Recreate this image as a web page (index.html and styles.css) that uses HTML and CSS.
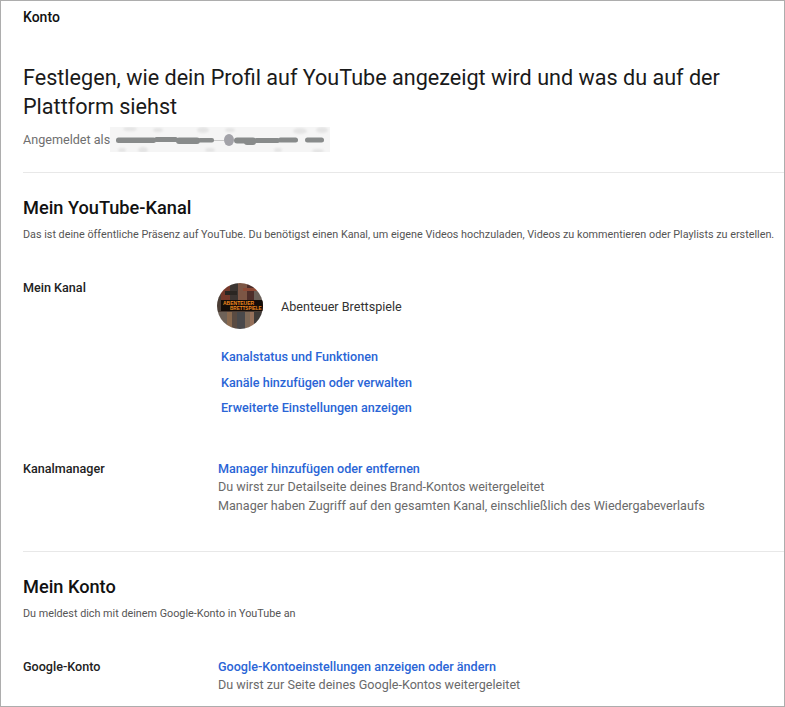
FILE: index.html
```html
<!DOCTYPE html>
<html>
<head>
    <title>Konto</title>
    <link rel="stylesheet" href="styles.css">
</head>
<body>
    <div class="page">
        <div class="crumb">Konto</div>
        <h1>Festlegen, wie dein Profil auf YouTube angezeigt wird und was du auf der Plattform siehst</h1>
        <div class="signed-in">
            <span>Angemeldet als</span>
            <svg class="redacted" width="220" height="25" viewBox="0 0 220 25">
                <defs>
                    <filter id="smear"><feGaussianBlur stdDeviation="0.7"/></filter>
                    <filter id="fade"><feGaussianBlur stdDeviation="1.2"/></filter>
                </defs>
                <rect width="220" height="25" fill="#f5f5f5"/>
                <g fill="#e4e4e4" filter="url(#fade)">
                    <ellipse cx="20" cy="2" rx="7" ry="2"/>
                    <ellipse cx="48" cy="3" rx="5" ry="2"/>
                    <ellipse cx="93" cy="3" rx="6" ry="3"/>
                    <ellipse cx="120" cy="3" rx="5" ry="2"/>
                    <ellipse cx="190" cy="4" rx="7" ry="3"/>
                    <ellipse cx="212" cy="3" rx="6" ry="3"/>
                    <ellipse cx="12" cy="23" rx="4" ry="2"/>
                    <ellipse cx="33" cy="23" rx="5" ry="3"/>
                    <ellipse cx="100" cy="23" rx="5" ry="2"/>
                    <ellipse cx="168" cy="23" rx="4" ry="2"/>
                    <ellipse cx="208" cy="24" rx="6" ry="2"/>
                </g>
                <g filter="url(#smear)" fill="#888b8b">
                    <rect x="6" y="10.5" width="40" height="5.5" rx="2.5"/>
                    <rect x="44" y="10" width="24" height="5" rx="2.5"/>
                    <rect x="66" y="10.5" width="24" height="6.5" rx="3"/>
                    <rect x="88" y="11" width="16" height="4.5" rx="2"/>
                    <path d="M104 13.5 H114" stroke="#c8c8c8" stroke-width="1" fill="none"/>
                    <ellipse cx="119" cy="13" rx="5" ry="6" fill="#a2a2a8"/>
                    <rect x="124" y="10.5" width="22" height="6" rx="3"/>
                    <rect x="134" y="12" width="12" height="6" rx="3"/>
                    <rect x="144" y="11" width="26" height="5" rx="2.5"/>
                    <rect x="168" y="10.5" width="20" height="5" rx="2.5"/>
                    <rect x="195" y="10.5" width="19" height="5" rx="2.5"/>
                </g>
            </svg>
        </div>

        <section class="section">
            <h2>Mein YouTube-Kanal</h2>
            <p class="intro">Das ist deine öffentliche Präsenz auf YouTube. Du benötigst einen Kanal, um eigene Videos hochzuladen, Videos zu kommentieren oder Playlists zu erstellen.</p>

            <div class="row row-channel">
                <div class="label">Mein Kanal</div>
                <div class="value">
                    <div class="channel">
                        <svg class="avatar" width="46" height="46" viewBox="0 0 46 46">
                            <defs>
                                <clipPath id="round"><circle cx="23" cy="23" r="23"/></clipPath>
                                <filter id="soft"><feGaussianBlur stdDeviation="0.6"/></filter>
                            </defs>
                            <g clip-path="url(#round)">
                                <g filter="url(#soft)">
                                    <rect width="46" height="46" fill="#4b3d36"/>
                                    <rect x="4" y="0" width="9" height="18" fill="#74392b"/>
                                    <rect x="13" y="0" width="8" height="18" fill="#3b3533"/>
                                    <rect x="21" y="0" width="9" height="18" fill="#7c5644"/>
                                    <rect x="30" y="0" width="7" height="18" fill="#4d2f2a"/>
                                    <rect x="37" y="0" width="9" height="18" fill="#6a6059"/>
                                    <rect x="8" y="8" width="12" height="4" fill="#2b2624"/>
                                    <rect x="26" y="5" width="14" height="3" fill="#8c4a34"/>
                                    <rect x="0" y="29" width="10" height="17" fill="#6e6258"/>
                                    <rect x="10" y="29" width="5" height="17" fill="#8a6a50"/>
                                    <rect x="15" y="29" width="5" height="17" fill="#5a4c42"/>
                                    <rect x="20" y="29" width="8" height="17" fill="#4a4a4c"/>
                                    <rect x="28" y="29" width="5" height="17" fill="#7f6a58"/>
                                    <rect x="33" y="29" width="4" height="17" fill="#95705a"/>
                                    <rect x="37" y="29" width="9" height="17" fill="#3f3a38"/>
                                </g>
                                <rect x="4" y="17" width="42" height="11" fill="#140d09"/>
                            </g>
                            <text class="avatar-text" x="6" y="22">ABENTEUER</text>
                            <text class="avatar-text avatar-text-small" x="13" y="27.2">BRETTSPIELE</text>
                        </svg>
                        <span>Abenteuer Brettspiele</span>
                    </div>
                    <div class="channel-links">
                        <a href="#">Kanalstatus und Funktionen</a>
                        <a href="#">Kanäle hinzufügen oder verwalten</a>
                        <a href="#">Erweiterte Einstellungen anzeigen</a>
                    </div>
                </div>
            </div>

            <div class="row row-manager">
                <div class="label">Kanalmanager</div>
                <div class="value">
                    <a href="#">Manager hinzufügen oder entfernen</a>
                    <div class="note">Du wirst zur Detailseite deines Brand-Kontos weitergeleitet</div>
                    <div class="note">Manager haben Zugriff auf den gesamten Kanal, einschließlich des Wiedergabeverlaufs</div>
                </div>
            </div>
        </section>

        <section class="section">
            <h2>Mein Konto</h2>
            <p class="intro">Du meldest dich mit deinem Google-Konto in YouTube an</p>

            <div class="row row-google">
                <div class="label">Google-Konto</div>
                <div class="value">
                    <a href="#">Google-Kontoeinstellungen anzeigen oder ändern</a>
                    <div class="note">Du wirst zur Seite deines Google-Kontos weitergeleitet</div>
                </div>
            </div>
        </section>
    </div>
</body>
</html>
```
FILE: styles.css
```css
html, body { margin: 0; padding: 0; height: 100%; background: #fff; }
body { font-family: Roboto, Arial, sans-serif; color: #111; overflow: hidden; }
a { color: #2a65d6; text-decoration: none; font-weight: 500; font-size: 12.6px; line-height: 18px; }
.page { box-sizing: border-box; height: 707px; padding: 9px 0 0 22px; border: 1px solid #adadad; overflow: hidden; }
.crumb { font-size: 14px; font-weight: 500; line-height: 15px; }
h1 { margin: 38px 40px 0 0; font-size: 21.6px; font-weight: 400; line-height: 29px; color: #1a1a1a; }
.signed-in { display: flex; align-items: center; height: 25px; margin-top: 6px; font-size: 12.6px; color: #6f6f6f; }
.section { margin-top: 20px; padding-top: 16px; border-top: 1px solid #e8e8e8; }
h2 { margin: 0; font-size: 18.2px; font-weight: 500; line-height: 38px; }
.intro { margin: 0; font-size: 10.8px; line-height: 16px; color: #555; white-space: nowrap; }
.row { display: flex; }
.label { width: 195px; flex: none; font-size: 12.6px; font-weight: 500; line-height: 18px; color: #222; }
.row-channel { margin-top: 36px; }
.channel { display: flex; align-items: center; gap: 18px; margin: 4px 0 0 -1px; font-size: 12.6px; color: #333; }
.avatar { display: block; }
.avatar-text { font-family: "Liberation Sans", sans-serif; font-size: 5px; font-weight: 700; fill: #ef8a1e; }
.avatar-text-small { font-size: 4.6px; }
.channel-links { display: flex; flex-direction: column; gap: 7.5px; margin: 19px 0 0 3px; }
.channel-links a { line-height: 18px; }
.value { display: flex; flex-direction: column; }
.note { font-size: 12.6px; line-height: 18.5px; color: #6a6a6a; }
.row-manager { margin-top: 43px; padding-bottom: 16px; }
.row-google { margin-top: 36px; }
```
